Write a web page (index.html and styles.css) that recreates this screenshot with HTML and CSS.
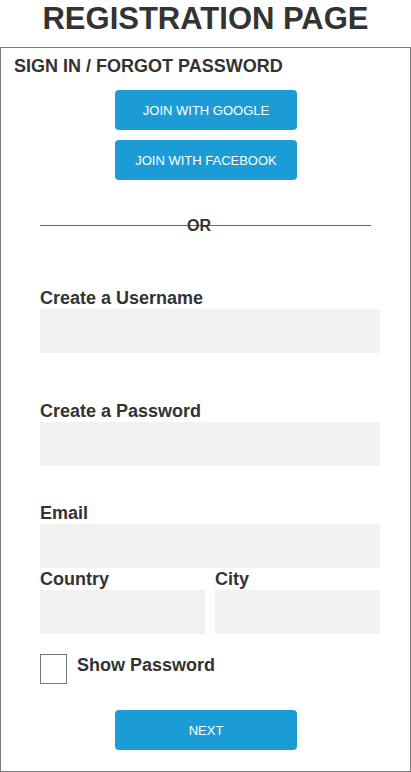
FILE: index.html
```html
<!DOCTYPE html>
<html lang="en">
<head>
<meta charset="utf-8">
<title>Registration Page</title>
<link rel="stylesheet" href="styles.css">
</head>
<body>
  <header class="page-header">
    <h1 class="page-title">REGISTRATION PAGE</h1>
  </header>
  <main class="panel">
    <h2 class="panel-heading">SIGN IN / FORGOT PASSWORD</h2>
    <button class="btn btn-google" type="button">JOIN WITH GOOGLE</button>
    <button class="btn btn-facebook" type="button">JOIN WITH FACEBOOK</button>
    <div class="divider">
      <span class="divider-line"></span>
      <span class="divider-text">OR</span>
    </div>
    <div class="field field-username">
      <label class="field-label">Create a Username</label>
      <div class="field-input"></div>
    </div>
    <div class="field field-password">
      <label class="field-label">Create a Password</label>
      <div class="field-input"></div>
    </div>
    <div class="field field-email">
      <label class="field-label">Email</label>
      <div class="field-input"></div>
    </div>
    <div class="field-row">
      <div class="field field-half">
        <label class="field-label">Country</label>
        <div class="field-input"></div>
      </div>
      <div class="field field-half">
        <label class="field-label">City</label>
        <div class="field-input"></div>
      </div>
    </div>
    <div class="check-row">
      <span class="check-box"></span>
      <span class="check-label">Show Password</span>
    </div>
    <button class="btn btn-next" type="button">NEXT</button>
  </main>
</body>
</html>
```
FILE: styles.css
```css
* {
  box-sizing: border-box;
}

html, body {
  margin: 0;
  padding: 0;
  background: #ffffff;
}

body {
  width: 411px;
  height: 772px;
  font-family: "Liberation Sans", Arial, sans-serif;
  color: #333333;
}

.page-header {
  height: 47px;
  padding-top: 3px;
}

.page-title {
  margin: 0;
  font-size: 31px;
  line-height: 31px;
  font-weight: bold;
  text-align: center;
  color: #333333;
}

.panel {
  height: 725px;
  border: 1px solid #7a7a7a;
  display: flex;
  flex-direction: column;
}

.panel-heading {
  margin: 9px 0 0 13px;
  font-size: 18px;
  line-height: 18px;
  font-weight: bold;
  color: #333333;
}

.btn {
  display: block;
  width: 182px;
  height: 40px;
  margin: 0 0 0 114px;
  border: none;
  border-radius: 4px;
  background: #1b9cd6;
  color: #ffffff;
  font-family: "Liberation Sans", Arial, sans-serif;
  font-size: 13px;
  padding: 0;
  text-align: center;
}

.btn-google {
  margin-top: 15px;
}

.btn-facebook {
  margin-top: 10px;
}

.btn-next {
  margin-top: 26px;
}

.divider {
  display: grid;
  width: 331px;
  margin: 38px 0 0 39px;
}

.divider-line {
  grid-area: 1 / 1;
  align-self: start;
  height: 1px;
  margin-top: 7px;
  background: #666666;
}

.divider-text {
  grid-area: 1 / 1;
  justify-self: start;
  margin-left: 147px;
  font-size: 16px;
  line-height: 16px;
  font-weight: bold;
  color: #333333;
}

.field {
  display: flex;
  flex-direction: column;
  margin-left: 39px;
  width: 340px;
}

.field-username {
  margin-top: 54px;
}

.field-password {
  margin-top: 48px;
}

.field-email {
  margin-top: 37px;
}

.field-label {
  font-size: 18px;
  line-height: 20px;
  font-weight: bold;
  color: #333333;
  margin-bottom: 1px;
}

.field-input {
  height: 44px;
  background: #f1f1f1;
}

.field-row {
  display: flex;
  gap: 10px;
  margin: 1px 0 0 39px;
  width: 340px;
}

.field-half {
  margin-left: 0;
  width: 165px;
}

.check-row {
  display: flex;
  align-items: flex-start;
  gap: 10px;
  margin: 20px 0 0 39px;
}

.check-box {
  width: 27px;
  height: 30px;
  border: 1px solid #777777;
  background: #ffffff;
}

.check-label {
  margin-top: 1px;
  font-size: 18px;
  line-height: 20px;
  font-weight: bold;
  color: #333333;
}
```
